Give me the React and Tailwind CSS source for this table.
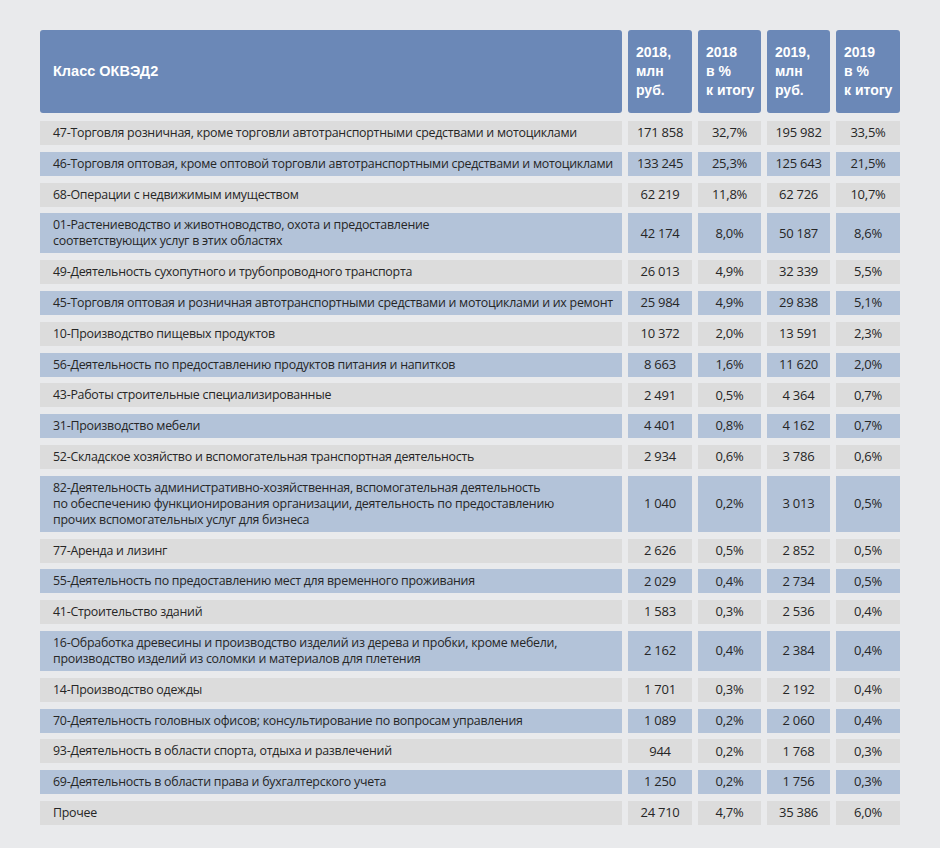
import React from 'react';

const rows = [
  ['47-Торговля розничная, кроме торговли автотранспортными средствами и мотоциклами', '171 858', '32,7%', '195 982', '33,5%'],
  ['46-Торговля оптовая, кроме оптовой торговли автотранспортными средствами и мотоциклами', '133 245', '25,3%', '125 643', '21,5%'],
  ['68-Операции с недвижимым имуществом', '62 219', '11,8%', '62 726', '10,7%'],
  ['01-Растениеводство и животноводство, охота и предоставление\nсоответствующих услуг в этих областях', '42 174', '8,0%', '50 187', '8,6%'],
  ['49-Деятельность сухопутного и трубопроводного транспорта', '26 013', '4,9%', '32 339', '5,5%'],
  ['45-Торговля оптовая и розничная автотранспортными средствами и мотоциклами и их ремонт', '25 984', '4,9%', '29 838', '5,1%'],
  ['10-Производство пищевых продуктов', '10 372', '2,0%', '13 591', '2,3%'],
  ['56-Деятельность по предоставлению продуктов питания и напитков', '8 663', '1,6%', '11 620', '2,0%'],
  ['43-Работы строительные специализированные', '2 491', '0,5%', '4 364', '0,7%'],
  ['31-Производство мебели', '4 401', '0,8%', '4 162', '0,7%'],
  ['52-Складское хозяйство и вспомогательная транспортная деятельность', '2 934', '0,6%', '3 786', '0,6%'],
  ['82-Деятельность административно-хозяйственная, вспомогательная деятельность\nпо обеспечению функционирования организации, деятельность по предоставлению\nпрочих вспомогательных услуг для бизнеса', '1 040', '0,2%', '3 013', '0,5%'],
  ['77-Аренда и лизинг', '2 626', '0,5%', '2 852', '0,5%'],
  ['55-Деятельность по предоставлению мест для временного проживания', '2 029', '0,4%', '2 734', '0,5%'],
  ['41-Строительство зданий', '1 583', '0,3%', '2 536', '0,4%'],
  ['16-Обработка древесины и производство изделий из дерева и пробки, кроме мебели,\nпроизводство изделий из соломки и материалов для плетения', '2 162', '0,4%', '2 384', '0,4%'],
  ['14-Производство одежды', '1 701', '0,3%', '2 192', '0,4%'],
  ['70-Деятельность головных офисов; консультирование по вопросам управления', '1 089', '0,2%', '2 060', '0,4%'],
  ['93-Деятельность в области спорта, отдыха и развлечений', '944', '0,2%', '1 768', '0,3%'],
  ['69-Деятельность в области права и бухгалтерского учета', '1 250', '0,2%', '1 756', '0,3%'],
  ['Прочее', '24 710', '4,7%', '35 386', '6,0%'],
];

const heads = [
  ['2018,', 'млн', 'руб.'],
  ['2018', 'в %', 'к итогу'],
  ['2019,', 'млн', 'руб.'],
  ['2019', 'в %', 'к итогу'],
];

export default function App() {
  return (
    <div className="w-[940px] h-[848px] overflow-hidden bg-[#e9eaec] pt-[30px] pl-[40px]">
      <div className="grid grid-cols-[582px_64px_63px_63px_64px] gap-x-[6px] gap-y-[6.8px] w-[860px]">
        {/* header */}
        <div className="h-[83px] mb-[1.2px] rounded-[3px] bg-[#6b88b7] flex items-center pl-[13px] text-white font-bold text-[14.5px] font-['Liberation_Sans',Arial,sans-serif]">
          Класс ОКВЭД2
        </div>
        {heads.map((h, i) => (
          <div key={i} className="h-[83px] rounded-[3px] bg-[#6b88b7] flex flex-col justify-center pl-[8px] text-white font-bold text-[14px] leading-[19px] font-['Liberation_Sans',Arial,sans-serif]">
            {h.map((t) => <span key={t}>{t}</span>)}
          </div>
        ))}

        {rows.map((r, i) => {
          const bg = i % 2 === 0 ? 'bg-[#dcdcdc]' : 'bg-[#b3c3d9]';
          return (
            <React.Fragment key={i}>
              <div className={`${bg} py-1 pl-[13px] text-[12.4px] leading-[16px] text-[#262626] whitespace-pre tracking-[-0.25px] font-['Open_Sans',sans-serif]`}>
                {r[0]}
              </div>
              {r.slice(1).map((v, j) => (
                <div key={j} className={`${bg} flex items-center justify-center text-[13px] text-[#262626] tracking-[-0.25px] font-['Open_Sans',sans-serif]`}>
                  {v}
                </div>
              ))}
            </React.Fragment>
          );
        })}
      </div>
    </div>
  );
}
